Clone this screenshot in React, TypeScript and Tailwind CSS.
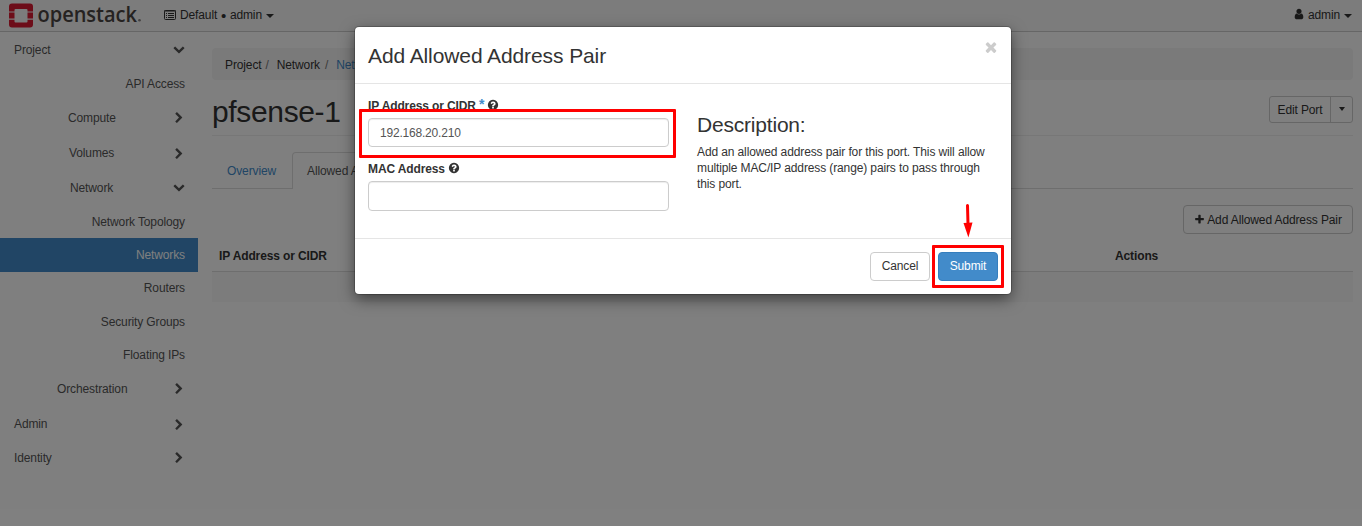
import type { ReactNode } from "react";

const paths = {
  right:
    "M1363 877l-742 742q-19 19-45 19t-45-19l-166-166q-19-19-19-45t19-45l531-531-531-531q-19-19-19-45t19-45l166-166q19-19 45-19t45 19l742 742q19 19 19 45t-19 45z",
  down: "M1683 808l-742 741q-19 19-45 19t-45-19l-742-741q-19-19-19-45.500t19-45.500l166-165q19-19 45-19t45 19l531 531 531-531q19-19 45-19t45 19l166 165q19 19 19 45.500t-19 45.500z",
  question:
    "M1024 1376v-192q0-14-9-23t-23-9h-192q-14 0-23 9t-9 23v192q0 14 9 23t23 9h192q14 0 23-9t9-23zm256-672q0-88-55.500-163t-138.500-116-170-41q-243 0-371 213-15 24 8 42l132 100q7 6 19 6 16 0 25-12 53-68 86-92 34-24 86-24 48 0 85.500 26t37.500 59q0 38-20 61t-68 45q-63 28-115.500 86.500t-52.500 125.500v36q0 14 9 23t23 9h192q14 0 23-9t9-23q0-19 21.500-49.500t54.500-49.500q32-18 49-28.500t46-35 44.500-48 28-60.500 12.500-81zm384 192q0 209-103 385.500t-279.500 279.500-385.500 103-385.500-103-279.500-279.500-103-385.500 103-385.500 279.500-279.500 385.500-103 385.500 103 279.500 279.500 103 385.500z",
  user: "M1536 1399q0 109-62.500 187t-150.500 78h-854q-88 0-150.500-78t-62.500-187q0-85 8.500-160.500t31.500-152 58.500-131 94-89 134.500-34.500q131 128 313 128t313-128q76 0 134.500 34.500t94 89 58.500 131 31.500 152 8.500 160.500zm-256-887q0 159-112.500 271.500t-271.500 112.500-271.500-112.500-112.500-271.500 112.500-271.500 271.500-112.500 271.500 112.500 112.500 271.500z",
  plus: "M1600 736v192q0 40-28 68t-68 28h-416v416q0 40-28 68t-68 28h-192q-40 0-68-28t-28-68v-416h-416q-40 0-68-28t-28-68v-192q0-40 28-68t68-28h416v-416q0-40 28-68t68-28h192q40 0 68 28t28 68v416h416q40 0 68 28t28 68z",
  times:
    "M1490 1322q0 40-28 68l-136 136q-28 28-68 28t-68-28l-294-294-294 294q-28 28-68 28t-68-28l-136-136q-28-28-28-68t28-68l294-294-294-294q-28-28-28-68t28-68l136-136q28-28 68-28t68 28l294 294 294-294q28-28 68-28t68 28l136 136q28 28 28 68t-28 68l-294 294 294 294q28 28 28 68z",
};

function Icon({ name, className = "" }: { name: keyof typeof paths; className?: string }) {
  return (
    <svg viewBox="0 0 1792 1792" fill="currentColor" className={`shrink-0 ${className}`}>
      <path d={paths[name]} />
    </svg>
  );
}

function Caret({ className = "border-x-4 border-t-4" }: { className?: string }) {
  return <span className={`inline-block h-0 w-0 border-x-transparent border-t-current ${className}`} />;
}

function Logo() {
  return (
    <svg width="134" height="30" viewBox="0 0 134 30" className="shrink-0 overflow-visible">
      <path
        fill="#da1a32"
        d="M3 2.500h18a3 3 0 0 1 3 3v5h-5.500V9a1 1 0 0 0-1-1h-11a1 1 0 0 0-1 1v1.500H0v-5a3 3 0 0 1 3-3zM0 11.600h5.500v6H0zM18.500 11.600H24v6h-5.500zM0 18.700h5.500v1.800a1 1 0 0 0 1 1h11a1 1 0 0 0 1-1v-1.800H24v4.800a3 3 0 0 1-3 3H3a3 3 0 0 1-3-3z"
      />
      <text
        x="28.500"
        y="20.700"
        fontFamily="Open Sans, sans-serif"
        fontWeight="600"
        fontSize="22"
        textLength="99.500"
        lengthAdjust="spacingAndGlyphs"
        letterSpacing="0"
        fill="#4a4543"
      >
        openstack
      </text>
      <circle cx="130.500" cy="19.300" r="1.300" fill="#8a8583" />
    </svg>
  );
}

type Row = { label: string; box: string; chevron?: "right" | "down" };

const rows: Row[] = [
  { label: "Project", box: "h-[35px] pt-0.5 pl-3.5 justify-between", chevron: "down" },
  { label: "API Access", box: "h-[34px] justify-end" },
  { label: "Compute", box: "h-[34px] pl-[68px] justify-between", chevron: "right" },
  { label: "Volumes", box: "h-[35px] pt-0.5 pl-[69px] justify-between", chevron: "right" },
  { label: "Network", box: "h-[35px] pt-0.5 pl-[70px] justify-between", chevron: "down" },
  { label: "Network Topology", box: "h-[33px] pt-0.5 justify-end" },
  { label: "Networks", box: "h-[34px] justify-end bg-[#428bca] text-white" },
  { label: "Routers", box: "h-[33px] justify-end" },
  { label: "Security Groups", box: "h-[34px] justify-end" },
  { label: "Floating IPs", box: "h-[33px] justify-end" },
  { label: "Orchestration", box: "h-[34px] pl-[57px] justify-between", chevron: "right" },
  { label: "Admin", box: "h-[35px] pt-0.5 pl-3.5 justify-between", chevron: "right" },
  { label: "Identity", box: "h-[34px] pl-3.5 justify-between", chevron: "right" },
];

function Navbar() {
  return (
    <header className="flex h-8 items-center justify-between border-b border-[#ccc] bg-[#f8f8f8] pr-2.5 pl-[9px]">
      <div className="flex items-center">
        <Logo />
        <svg width="12" height="10" viewBox="0 0 12 10" className="mb-0.5 ml-[21px]" fill="none">
          <rect x="0.500" y="0.500" width="11" height="9" rx="1" stroke="#333" />
          <path d="M0 1h12M2 3.500h1M4 3.500h6M2 5.500h1M4 5.500h6M2 7.500h1M4 7.500h6" stroke="#333" />
        </svg>
        <span className="ml-1 flex w-[82px] justify-between">
          <span>Default</span>
          <span className="text-[15px]">•</span>
          <span>admin</span>
        </span>
        <Caret className="ml-1 border-x-4 border-t-4" />
      </div>
      <div className="flex items-center">
        <Icon name="user" className="mb-1 h-3 w-3" />
        <span className="ml-[3px]">admin</span>
        <Caret className="ml-1 border-x-4 border-t-4" />
      </div>
    </header>
  );
}

function Sidebar() {
  return (
    <nav className="w-[198px] shrink-0 text-[#555]">
      {rows.map((r) => (
        <div key={r.label} className={`flex items-center pr-[13px] ${r.box}`}>
          <span>{r.label}</span>
          {r.chevron && <Icon name={r.chevron} className={r.chevron === "down" ? "mb-1 h-3 w-3" : "h-3 w-3"} />}
        </div>
      ))}
    </nav>
  );
}

function Main() {
  return (
    <main className="mr-[9px] ml-3.5 min-w-0 flex-1 pt-4">
      <div className="flex h-8 items-center rounded bg-[#f5f5f5] pt-0.5 pl-[13px] whitespace-pre">
        <span>Project</span>
        <span className="ml-1 text-[#777]">/</span>
        <span className="ml-2">Network</span>
        <span className="ml-[5px] text-[#777]">/</span>
        <span className="ml-2 text-[#428bca]">Networks</span>
      </div>
      <div className="flex h-14 items-center justify-between border-b border-[#eee]">
        <h1 className="mt-2 text-[30px] leading-8 tracking-[-0.35px]">pfsense-1</h1>
        <div className="mt-[3px] flex h-[27px] rounded-[3px] border border-[#ccc]">
          <span className="flex w-[61px] items-center justify-center border-r border-[#ccc] pt-0.5">Edit Port</span>
          <span className="flex w-[21px] items-center justify-center">
            <Caret className="border-x-[3px] border-t-4" />
          </span>
        </div>
      </div>
      <div className="mt-4 flex h-[37px] border-b border-[#ddd]">
        <span className="flex w-20 items-center pt-0.5 pl-[15px] text-[#428bca]">Overview</span>
        <span className="flex h-[37px] w-[171px] items-center rounded-t border border-b-0 border-[#ddd] bg-white pt-px pl-3.5 text-[#555]">
          Allowed Address Pairs
        </span>
      </div>
      <div className="mt-4 flex justify-end">
        <span className="flex h-[29px] w-[170px] items-center justify-center gap-[2px] rounded border border-[#ccc]">
          <Icon name="plus" className="h-[11px] w-[11px]" />
          <span className="pt-px">Add Allowed Address Pair</span>
        </span>
      </div>
      <div className="mt-1.5 grid h-8 grid-cols-[896px_1fr] items-center border-b border-[#ddd] pt-px pl-[7px] font-bold">
        <span>IP Address or CIDR</span>
        <span>Actions</span>
      </div>
      <div className="h-[30px] bg-[#f9f9f9]" />
    </main>
  );
}

function Label({ children, required }: { children: ReactNode; required?: boolean }) {
  return (
    <div className="flex h-[17px] items-center font-bold">
      <span>{children}</span>
      {required && <span className="mb-1 ml-[3px] text-[14px] text-[#428bca]">*</span>}
      <Icon name="question" className="mb-[3px] ml-[3px] h-3 w-3" />
    </div>
  );
}

function Modal() {
  return (
    <section className="absolute top-[27px] left-[355px] h-[267px] w-[656px] rounded bg-white shadow-[0_5px_15px_rgba(0,0,0,0.5),0_0_0_1px_rgba(0,0,0,0.2)]">
      <div className="flex h-[57px] justify-between border-b border-[#e5e5e5] pl-[13px]">
        <h2 className="mt-4 text-[21px] leading-[26px] tracking-[-0.1px]">Add Allowed Address Pair</h2>
        <Icon name="times" className="mt-3 mr-3 h-4 w-4 text-[#ccc]" />
      </div>
      <div className="flex h-[154px] px-[13px] pt-3.5">
        <div className="w-[301px]">
          <Label required>IP Address or CIDR</Label>
          <input
            defaultValue="192.168.20.210"
            className="mt-[3px] block h-[29px] w-full rounded border border-[#ccc] pl-[11px] tracking-[-0.2px] text-[#555] shadow-[inset_0_1px_1px_rgba(0,0,0,0.075)]"
          />
          <div className="mt-[14px]">
            <Label>MAC Address</Label>
          </div>
          <input className="mt-[3px] block h-[30px] w-full rounded border border-[#ccc] shadow-[inset_0_1px_1px_rgba(0,0,0,0.075)]" />
        </div>
        <div className="mt-3.5 ml-7 w-[295px]">
          <h3 className="text-[21px] leading-[26px] tracking-[-0.2px]">Description:</h3>
          <p className="mt-1.5 leading-4">
            Add an allowed address pair for this port. This will allow
            <br />
            multiple MAC/IP address (range) pairs to pass through
            <br />
            this port.
          </p>
        </div>
      </div>
      <div className="flex justify-end gap-2 border-t border-[#e5e5e5] pt-[13px] pr-[13px]">
        <button className="h-[29px] w-[60px] rounded border border-[#ccc]">Cancel</button>
        <button className="h-[29px] w-[60px] rounded border border-[#357ebd] bg-[#428bca] text-white">Submit</button>
      </div>
      <div className="absolute top-[82px] left-1 h-[49px] w-[317px] rounded-[1px] border-3 border-[#f00]" />
      <div className="absolute top-[218px] left-[577px] h-[43px] w-[72px] rounded-[1px] border-3 border-[#f00]" />
      <svg width="10" height="34" viewBox="0 0 10 34" className="absolute top-[177px] left-[608px]">
        <path d="M4.500 1.500L5 20" stroke="#f00" strokeWidth="3" strokeLinecap="round" />
        <path d="M0.500 19L9.500 18.500L5.400 33.500z" fill="#f00" />
      </svg>
    </section>
  );
}

export default function App() {
  return (
    <div className="relative h-[526px] w-[1362px] overflow-hidden bg-white font-['Liberation_Sans',Arial,sans-serif] text-[12px] leading-[17px] tracking-[-0.12px] text-[#333]">
      <Navbar />
      <div className="flex">
        <Sidebar />
        <Main />
      </div>
      <div className="absolute inset-0 bg-black/50" />
      <Modal />
    </div>
  );
}
